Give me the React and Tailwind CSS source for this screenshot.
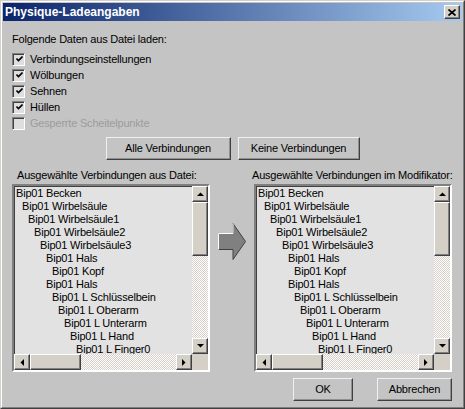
import React from "react";

const items = [
  [0, "Bip01 Becken"],
  [1, "Bip01 Wirbelsäule"],
  [2, "Bip01 Wirbelsäule1"],
  [3, "Bip01 Wirbelsäule2"],
  [4, "Bip01 Wirbelsäule3"],
  [5, "Bip01 Hals"],
  [6, "Bip01 Kopf"],
  [5, "Bip01 Hals"],
  [6, "Bip01 L Schlüsselbein"],
  [7, "Bip01 L Oberarm"],
  [8, "Bip01 L Unterarm"],
  [9, "Bip01 L Hand"],
  [10, "Bip01 L Finger0"],
];

const checks = [
  ["Verbindungseinstellungen", true, false],
  ["Wölbungen", true, false],
  ["Sehnen", true, false],
  ["Hüllen", true, false],
  ["Gesperrte Scheitelpunkte", false, true],
];

function Tri({ dir }) {
  const pts = {
    up: "0,4 7,4 3.5,0.5",
    down: "0,0 7,0 3.5,3.5",
    left: "4,0 4,7 0.5,3.5",
    right: "0,0 0,7 3.5,3.5",
  }[dir];
  const vertical = dir === "up" || dir === "down";
  return (
    <svg width={vertical ? 7 : 4} height={vertical ? 4 : 7} viewBox={vertical ? "0 0 7 4" : "0 0 4 7"}>
      <polygon points={pts} fill="#000" />
    </svg>
  );
}

function SbButton({ dir }) {
  return (
    <div className="w-[16px] h-[16px] shrink-0 bg-[#d4d0c8] border border-t-white border-l-white border-b-[#404040] border-r-[#404040] shadow-[inset_-1px_-1px_0_#808080] flex items-center justify-center">
      <Tri dir={dir} />
    </div>
  );
}

const track = "bg-[repeating-conic-gradient(#ffffff_0_25%,#d4d0c8_0_50%)] bg-[length:2px_2px]";

function ListBox() {
  return (
    <div className="w-[198px] h-[188px] shrink-0 border-2 border-t-[#808080] border-l-[#808080] border-b-white border-r-white shadow-[inset_1px_1px_0_#404040] bg-[#e2e2e2] flex flex-col">
      <div className="flex flex-1 min-h-0">
        <div className="flex-1 overflow-hidden pl-[2px] pt-[1px] leading-[13px] whitespace-nowrap">
          {items.map(([lvl, t], i) => (
            <div key={i} style={{ paddingLeft: lvl * 6 }}>
              {t}
            </div>
          ))}
        </div>
        <div className="w-[16px] flex flex-col">
          <SbButton dir="up" />
          <div className="h-[54px] bg-[#d4d0c8] border border-t-white border-l-white border-b-[#404040] border-r-[#404040] shadow-[inset_-1px_-1px_0_#808080]" />
          <div className={"flex-1 " + track} />
          <SbButton dir="down" />
        </div>
      </div>
      <div className="flex h-[16px]">
        <SbButton dir="left" />
        <div className="w-[51px] bg-[#d4d0c8] border border-t-white border-l-white border-b-[#404040] border-r-[#404040] shadow-[inset_-1px_-1px_0_#808080]" />
        <div className={"flex-1 " + track} />
        <SbButton dir="right" />
        <div className="w-[16px] bg-[#d4d0c8]" />
      </div>
    </div>
  );
}

function Button({ w, children }) {
  return (
    <div
      className="h-[23px] shrink-0 bg-[#c4c4c4] border border-t-[#f0f0f0] border-l-[#f0f0f0] border-b-[#404040] border-r-[#404040] shadow-[inset_-1px_-1px_0_#909090] flex items-center justify-center whitespace-nowrap"
      style={{ width: w }}
    >
      {children}
    </div>
  );
}

function CheckBox({ checked, disabled }) {
  return (
    <div className="w-[13px] h-[13px] shrink-0 border border-t-[#808080] border-l-[#808080] border-b-white border-r-white shadow-[inset_1px_1px_0_#404040] bg-[#dedede] flex items-center justify-center">
      {checked && (
        <svg width="7" height="7" viewBox="0 0 7 7" className="ml-[1px] mt-[1px]">
          <polyline points="0.5,2.5 2.5,4.5 6.5,0.5" fill="none" stroke={disabled ? "#808080" : "#000"} strokeWidth="1.6" />
        </svg>
      )}
    </div>
  );
}

export default function App() {
  return (
    <div className="w-[465px] h-[409px] bg-[#c4c4c4] border border-t-[#d4d0c8] border-l-[#d4d0c8] border-b-[#404040] border-r-[#404040] font-['Liberation_Sans',Arial,sans-serif] text-[11px] tracking-[-0.2px] text-black overflow-hidden">
      <div className="h-full border border-t-white border-l-white border-b-[#808080] border-r-[#808080] p-[1px] flex flex-col">
        <div className="h-[18px] bg-[linear-gradient(to_right,#0a246a,#a6caf0)] flex items-center justify-between pl-[2px] pr-[2px]">
          <span className="text-white font-bold text-[12px] leading-[14px] tracking-normal">Physique-Ladeangaben</span>
          <div className="w-[16px] h-[14px] bg-[#d4d0c8] border border-t-white border-l-white border-b-[#404040] border-r-[#404040] shadow-[inset_-1px_-1px_0_#808080] flex items-center justify-center">
            <svg width="8" height="7" viewBox="0 0 8 7">
              <path d="M0.5 0.5 L7.5 6.5 M7.5 0.5 L0.5 6.5" stroke="#000" strokeWidth="1.7" />
            </svg>
          </div>
        </div>
        <div className="flex flex-col px-[9px]">
          <div className="mt-[12px] leading-[13px]">Folgende Daten aus Datei laden:</div>
          <div className="mt-[5px] flex flex-col">
            {checks.map(([t, c, d]) => (
              <div key={t} className="h-[16px] flex items-center gap-[5px]">
                <CheckBox checked={c} disabled={d} />
                <span className={d ? "text-[#9c9c9c] leading-[13px]" : "leading-[13px]"}>{t}</span>
              </div>
            ))}
          </div>
          <div className="mt-[6px] flex justify-center gap-[7px]">
            <Button w={125}>Alle Verbindungen</Button>
            <Button w={122}>Keine Verbindungen</Button>
          </div>
          <div className="mt-[9px] flex leading-[13px] whitespace-nowrap">
            <span className="w-[240px] pl-[5px]">Ausgewählte Verbindungen aus Datei:</span>
            <span>Ausgewählte Verbindungen im Modifikator:</span>
          </div>
          <div className="mt-[2px] flex items-start">
            <ListBox />
            <div className="w-[44px] flex justify-center mt-[39px]">
              <svg width="28" height="37" viewBox="0 0 28 37">
                <polygon points="0.5,10.5 15,10.5 15,0.5 27.5,18.5 15,36.5 15,26.5 0.5,26.5" fill="#808080" stroke="#404040" strokeWidth="1" />
                <polyline points="0.5,26.5 0.5,10.5 15,10.5 15,0.5" fill="none" stroke="#ffffff" strokeWidth="1" />
              </svg>
            </div>
            <ListBox />
          </div>
          <div className="mt-[6px] flex justify-end gap-[24px] pr-[1px]">
            <Button w={60}>OK</Button>
            <Button w={75}>Abbrechen</Button>
          </div>
        </div>
      </div>
    </div>
  );
}
